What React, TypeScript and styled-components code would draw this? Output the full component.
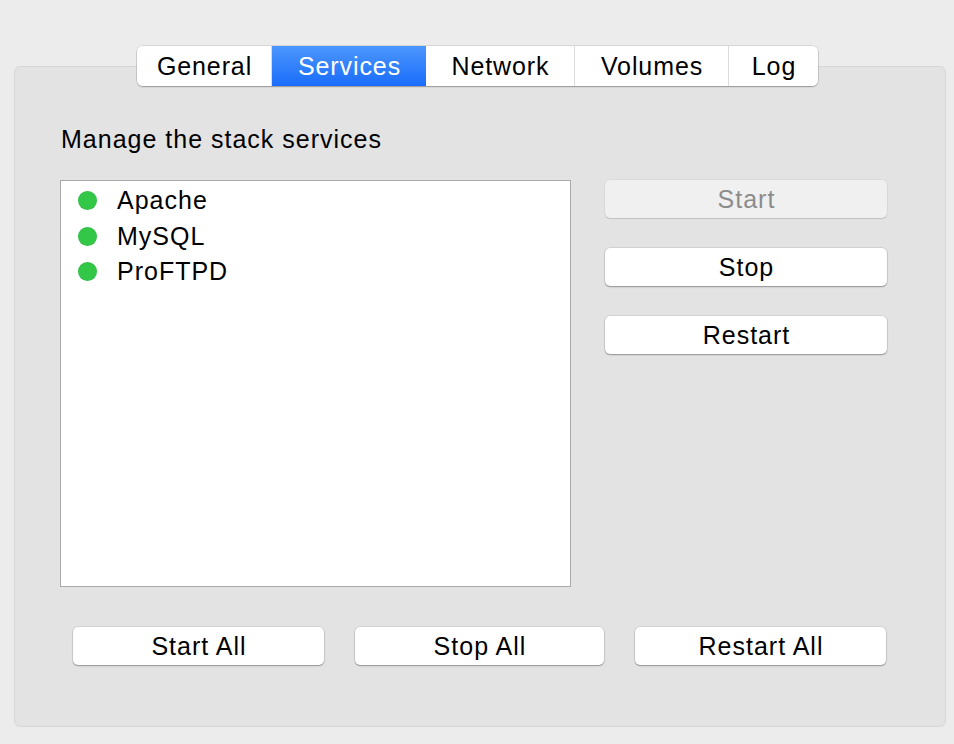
import React from "react";
import styled, { createGlobalStyle } from "styled-components";

const Global = createGlobalStyle`
  html, body { margin: 0; padding: 0; background: #ececec; }
  body { font-family: "Liberation Sans", Arial, sans-serif; color: #000; }
`;

const Page = styled.div`
  width: 954px;
  height: 744px;
  box-sizing: border-box;
  padding: 46px 8px 0 14px;
  display: flex;
  flex-direction: column;
`;

const TabBar = styled.div`
  position: relative;
  z-index: 1;
  align-self: flex-start;
  margin-left: 123px;
  margin-bottom: -20px;
  height: 40px;
  display: flex;
  background: #fff;
  border-radius: 6px;
  box-shadow: 0 0 0 0.5px rgba(0, 0, 0, 0.18), 0 1px 1.5px rgba(0, 0, 0, 0.28);
  overflow: hidden;
`;

const Tab = styled.div<{ $w: number; $active?: boolean; $last?: boolean }>`
  width: ${(p) => p.$w}px;
  box-sizing: border-box;
  display: flex;
  align-items: center;
  justify-content: center;
  padding-left: 1px;
  font-size: 25px;
  letter-spacing: 0.9px;
  color: ${(p) => (p.$active ? "#fff" : "#000")};
  background: ${(p) =>
    p.$active ? "linear-gradient(#4c97fd, #1a6cfb)" : "#fff"};
  border-right: ${(p) => (p.$last || p.$active ? "none" : "1px solid #dcdcdc")};
`;

const Panel = styled.div`
  height: 661px;
  box-sizing: border-box;
  background: #e3e3e3;
  border: 1px solid #d6d6d6;
  border-radius: 6px;
  padding: 57px 0 0 0;
  display: flex;
  flex-direction: column;
`;

const Heading = styled.div`
  margin-left: 46px;
  font-size: 25px;
  line-height: 30px;
  letter-spacing: 1px;
`;

const MainRow = styled.div`
  margin-top: 26px;
  margin-left: 45px;
  display: flex;
  align-items: flex-start;
`;

const ListBox = styled.div`
  width: 511px;
  height: 407px;
  box-sizing: border-box;
  background: #fff;
  border: 1px solid #a9a9a9;
  padding-top: 2px;
  display: flex;
  flex-direction: column;
`;

const Item = styled.div`
  height: 35.5px;
  display: flex;
  align-items: center;
  padding-left: 17px;
  gap: 20px;
  font-size: 25px;
  letter-spacing: 1px;
`;

const Dot = styled.span`
  width: 19px;
  height: 19px;
  border-radius: 50%;
  background: #33c748;
  box-shadow: inset 0 0 0 0.5px rgba(0, 0, 0, 0.08);
`;

const SideColumn = styled.div`
  margin-left: 34px;
  display: flex;
  flex-direction: column;
  gap: 30px;
`;

const Button = styled.div<{ $w: number; $disabled?: boolean }>`
  width: ${(p) => p.$w}px;
  height: 38px;
  box-sizing: border-box;
  display: flex;
  align-items: center;
  justify-content: center;
  padding-left: 1px;
  font-size: 25px;
  letter-spacing: 1px;
  border-radius: 5px;
  background: ${(p) => (p.$disabled ? "#f0f0f0" : "#fff")};
  color: ${(p) => (p.$disabled ? "#8c8c8c" : "#000")};
  box-shadow: ${(p) =>
    p.$disabled
      ? "0 0 0 0.5px rgba(0,0,0,0.08), 0 1px 1px rgba(0,0,0,0.12)"
      : "0 0 0 0.5px rgba(0,0,0,0.14), 0 1px 1.5px rgba(0,0,0,0.3)"};
`;

const BottomRow = styled.div`
  margin-top: 40px;
  margin-left: 58px;
  display: flex;
  gap: 31px;
`;

const services = ["Apache", "MySQL", "ProFTPD"];
const tabs = [
  { label: "General", w: 135 },
  { label: "Services", w: 154, active: true },
  { label: "Network", w: 149 },
  { label: "Volumes", w: 154 },
  { label: "Log", w: 89, last: true },
];

export default function App() {
  return (
    <>
      <Global />
      <Page>
        <TabBar>
          {tabs.map((t) => (
            <Tab key={t.label} $w={t.w} $active={t.active} $last={t.last}>
              {t.label}
            </Tab>
          ))}
        </TabBar>
        <Panel>
          <Heading>Manage the stack services</Heading>
          <MainRow>
            <ListBox>
              {services.map((s) => (
                <Item key={s}>
                  <Dot />
                  {s}
                </Item>
              ))}
            </ListBox>
            <SideColumn>
              <Button $w={282} $disabled>
                Start
              </Button>
              <Button $w={282}>Stop</Button>
              <Button $w={282}>Restart</Button>
            </SideColumn>
          </MainRow>
          <BottomRow>
            <Button $w={251}>Start All</Button>
            <Button $w={249}>Stop All</Button>
            <Button $w={251}>Restart All</Button>
          </BottomRow>
        </Panel>
      </Page>
    </>
  );
}
